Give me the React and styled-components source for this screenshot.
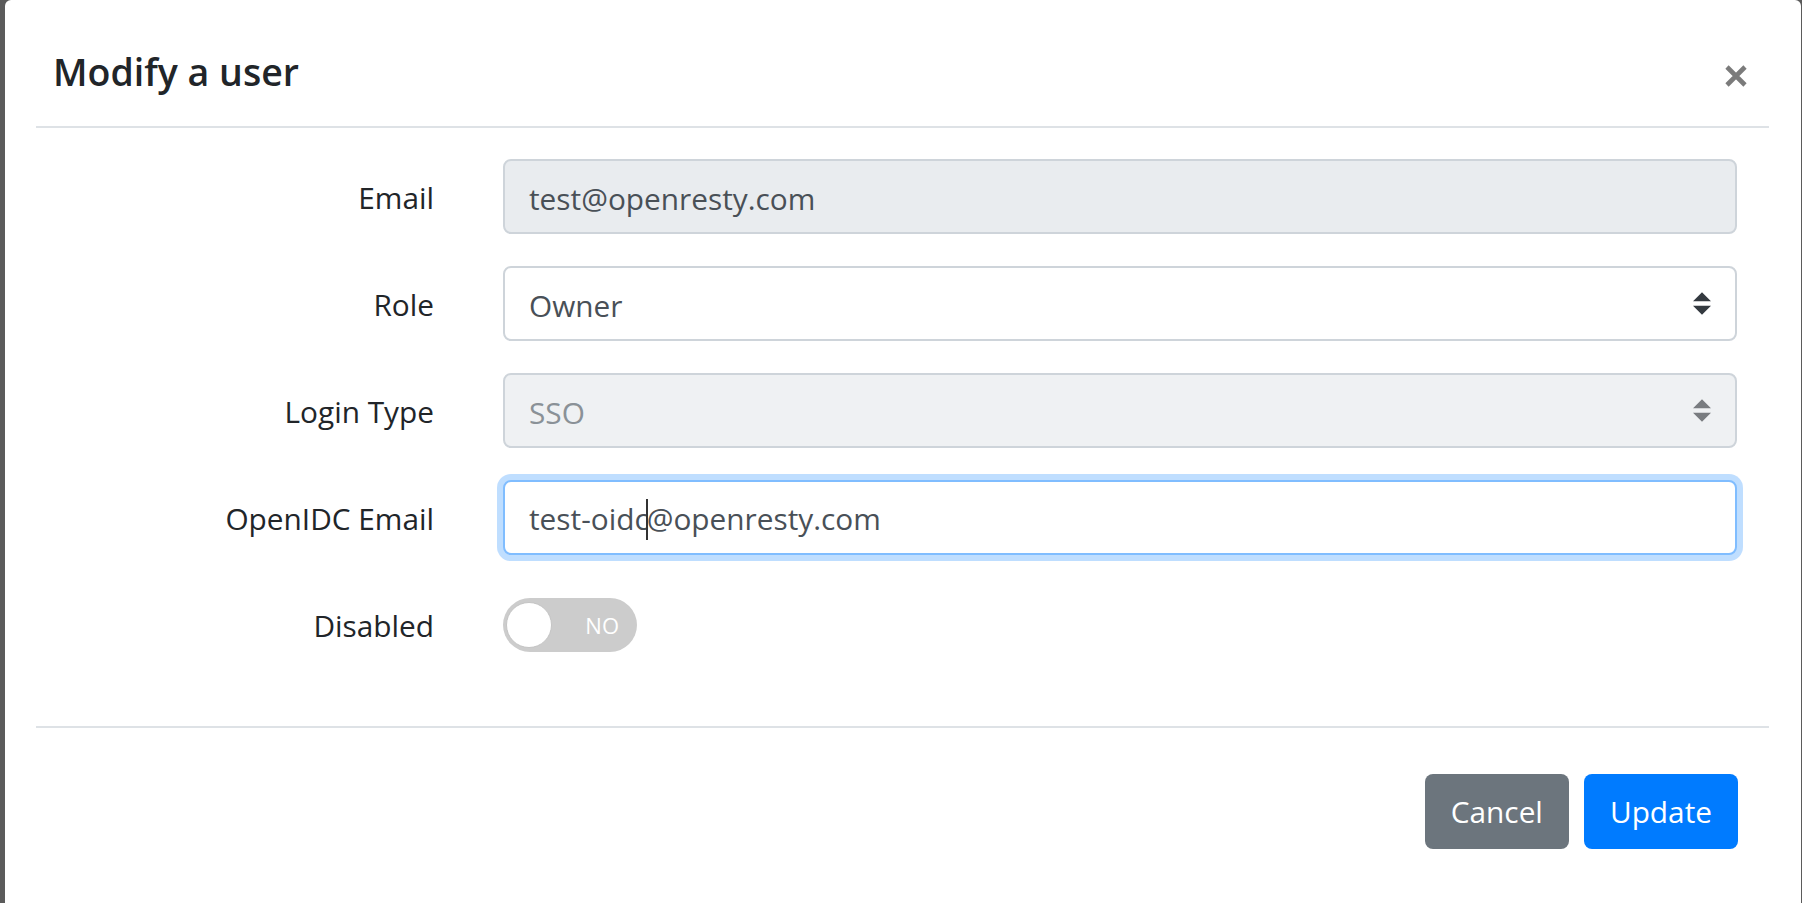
import React from 'react'
import styled, { createGlobalStyle } from 'styled-components'

const GlobalStyle = createGlobalStyle`
  html, body {
    margin: 0;
    padding: 0;
    background-color: #5b5b5b;
    font-family: "Open Sans", "Noto Sans", sans-serif;
    color: #212529;
  }
  * {
    box-sizing: border-box;
  }
`

const Backdrop = styled.div`
  height: 903px;
  overflow: hidden;
  padding: 0 1px 0 5px;
`

const Modal = styled.div`
  height: 100%;
  background-color: #fff;
  border-radius: 6px 6px 0 0;
  padding: 0 32px 0 31px;
`

const Header = styled.div`
  height: 128px;
  display: flex;
  align-items: center;
  justify-content: space-between;
  padding: 18px 22px 0 17px;
  border-bottom: 2px solid #dee2e6;
`

const Title = styled.h5`
  margin: 0;
  font-size: 37.5px;
  font-weight: 600;
  line-height: 1.5;
  color: #212529;
`

const CloseButton = styled.button`
  background: none;
  border: none;
  padding: 0;
  margin-top: 8px;
  display: flex;
  cursor: pointer;
`

const Body = styled.div`
  display: flex;
  flex-direction: column;
  gap: 32px;
  padding: 31px 0 64px;
`

const Row = styled.div`
  display: grid;
  grid-template-columns: 398px 1234px;
  column-gap: 69px;
  align-items: center;
  height: 75px;
`

const Label = styled.label`
  text-align: right;
  font-size: 29.8px;
  line-height: 1.5;
  padding-top: 3px;
  color: #212529;
`

const Field = styled.div`
  height: 75px;
  display: flex;
  align-items: center;
  justify-content: space-between;
  padding: 3px 24px 0;
  border: 2px solid ${p => (p.$focused ? '#80bdff' : '#ced4da')};
  border-radius: 8px;
  background-color: ${p => p.$bg || '#fff'};
  color: ${p => (p.$muted ? '#8a9197' : '#495057')};
  font-size: 29.8px;
  box-shadow: ${p => (p.$focused ? '0 0 0 6px rgba(0, 123, 255, 0.25)' : 'none')};
`

const Arrows = styled.svg`
  margin-top: -3px;
`

const Caret = styled.span`
  display: inline-block;
  width: 2px;
  height: 41px;
  margin: -4px -1px 0 -3px;
  background-color: #333;
  vertical-align: middle;
`

const Toggle = styled.div`
  width: 134px;
  height: 54px;
  border-radius: 27px;
  background-color: #cccccc;
  display: flex;
  align-items: center;
  padding: 0 18px 0 3px;
`

const Knob = styled.span`
  width: 46px;
  height: 46px;
  border-radius: 50%;
  background-color: #fff;
  border: 1px solid #c4c4c4;
`

const ToggleText = styled.span`
  margin-left: auto;
  color: #fff;
  font-size: 22px;
`

const Footer = styled.div`
  display: flex;
  justify-content: flex-end;
  gap: 15px;
  padding: 46px 31px 0 0;
  border-top: 2px solid #dee2e6;
`

const Button = styled.button`
  height: 75px;
  padding: 0 26px;
  border: none;
  border-radius: 8px;
  font-family: inherit;
  font-size: 29.8px;
  color: #fff;
  background-color: ${p => (p.$primary ? '#007bff' : '#6c757d')};
  cursor: pointer;
`

const SelectArrows = ({ color }) => (
  <Arrows width="18" height="23" viewBox="0 0 4 5">
    <path d="M2 0L0 2h4zm0 5L0 3h4z" fill={color} />
  </Arrows>
)

const App = () => {
  return (
    <>
      <GlobalStyle />
      <Backdrop>
        <Modal>
          <Header>
            <Title>Modify a user</Title>
            <CloseButton aria-label="Close">
              <svg width="22" height="22" viewBox="0 0 22 22">
                <path d="M2 2L20 20M20 2L2 20" stroke="#7b7b7b" strokeWidth="4.6" />
              </svg>
            </CloseButton>
          </Header>

          <Body>
            <Row>
              <Label>Email</Label>
              <Field $bg="#e9ecef">test@openresty.com</Field>
            </Row>
            <Row>
              <Label>Role</Label>
              <Field>
                <span>Owner</span>
                <SelectArrows color="#343a40" />
              </Field>
            </Row>
            <Row>
              <Label>Login Type</Label>
              <Field $bg="#eff1f3" $muted>
                <span>SSO</span>
                <SelectArrows color="#797c80" />
              </Field>
            </Row>
            <Row>
              <Label>OpenIDC Email</Label>
              <Field $focused>
                <span>test-oidc<Caret />@openresty.com</span>
              </Field>
            </Row>
            <Row>
              <Label>Disabled</Label>
              <Toggle>
                <Knob />
                <ToggleText>NO</ToggleText>
              </Toggle>
            </Row>
          </Body>

          <Footer>
            <Button>Cancel</Button>
            <Button $primary>Update</Button>
          </Footer>
        </Modal>
      </Backdrop>
    </>
  )
}

export default App
